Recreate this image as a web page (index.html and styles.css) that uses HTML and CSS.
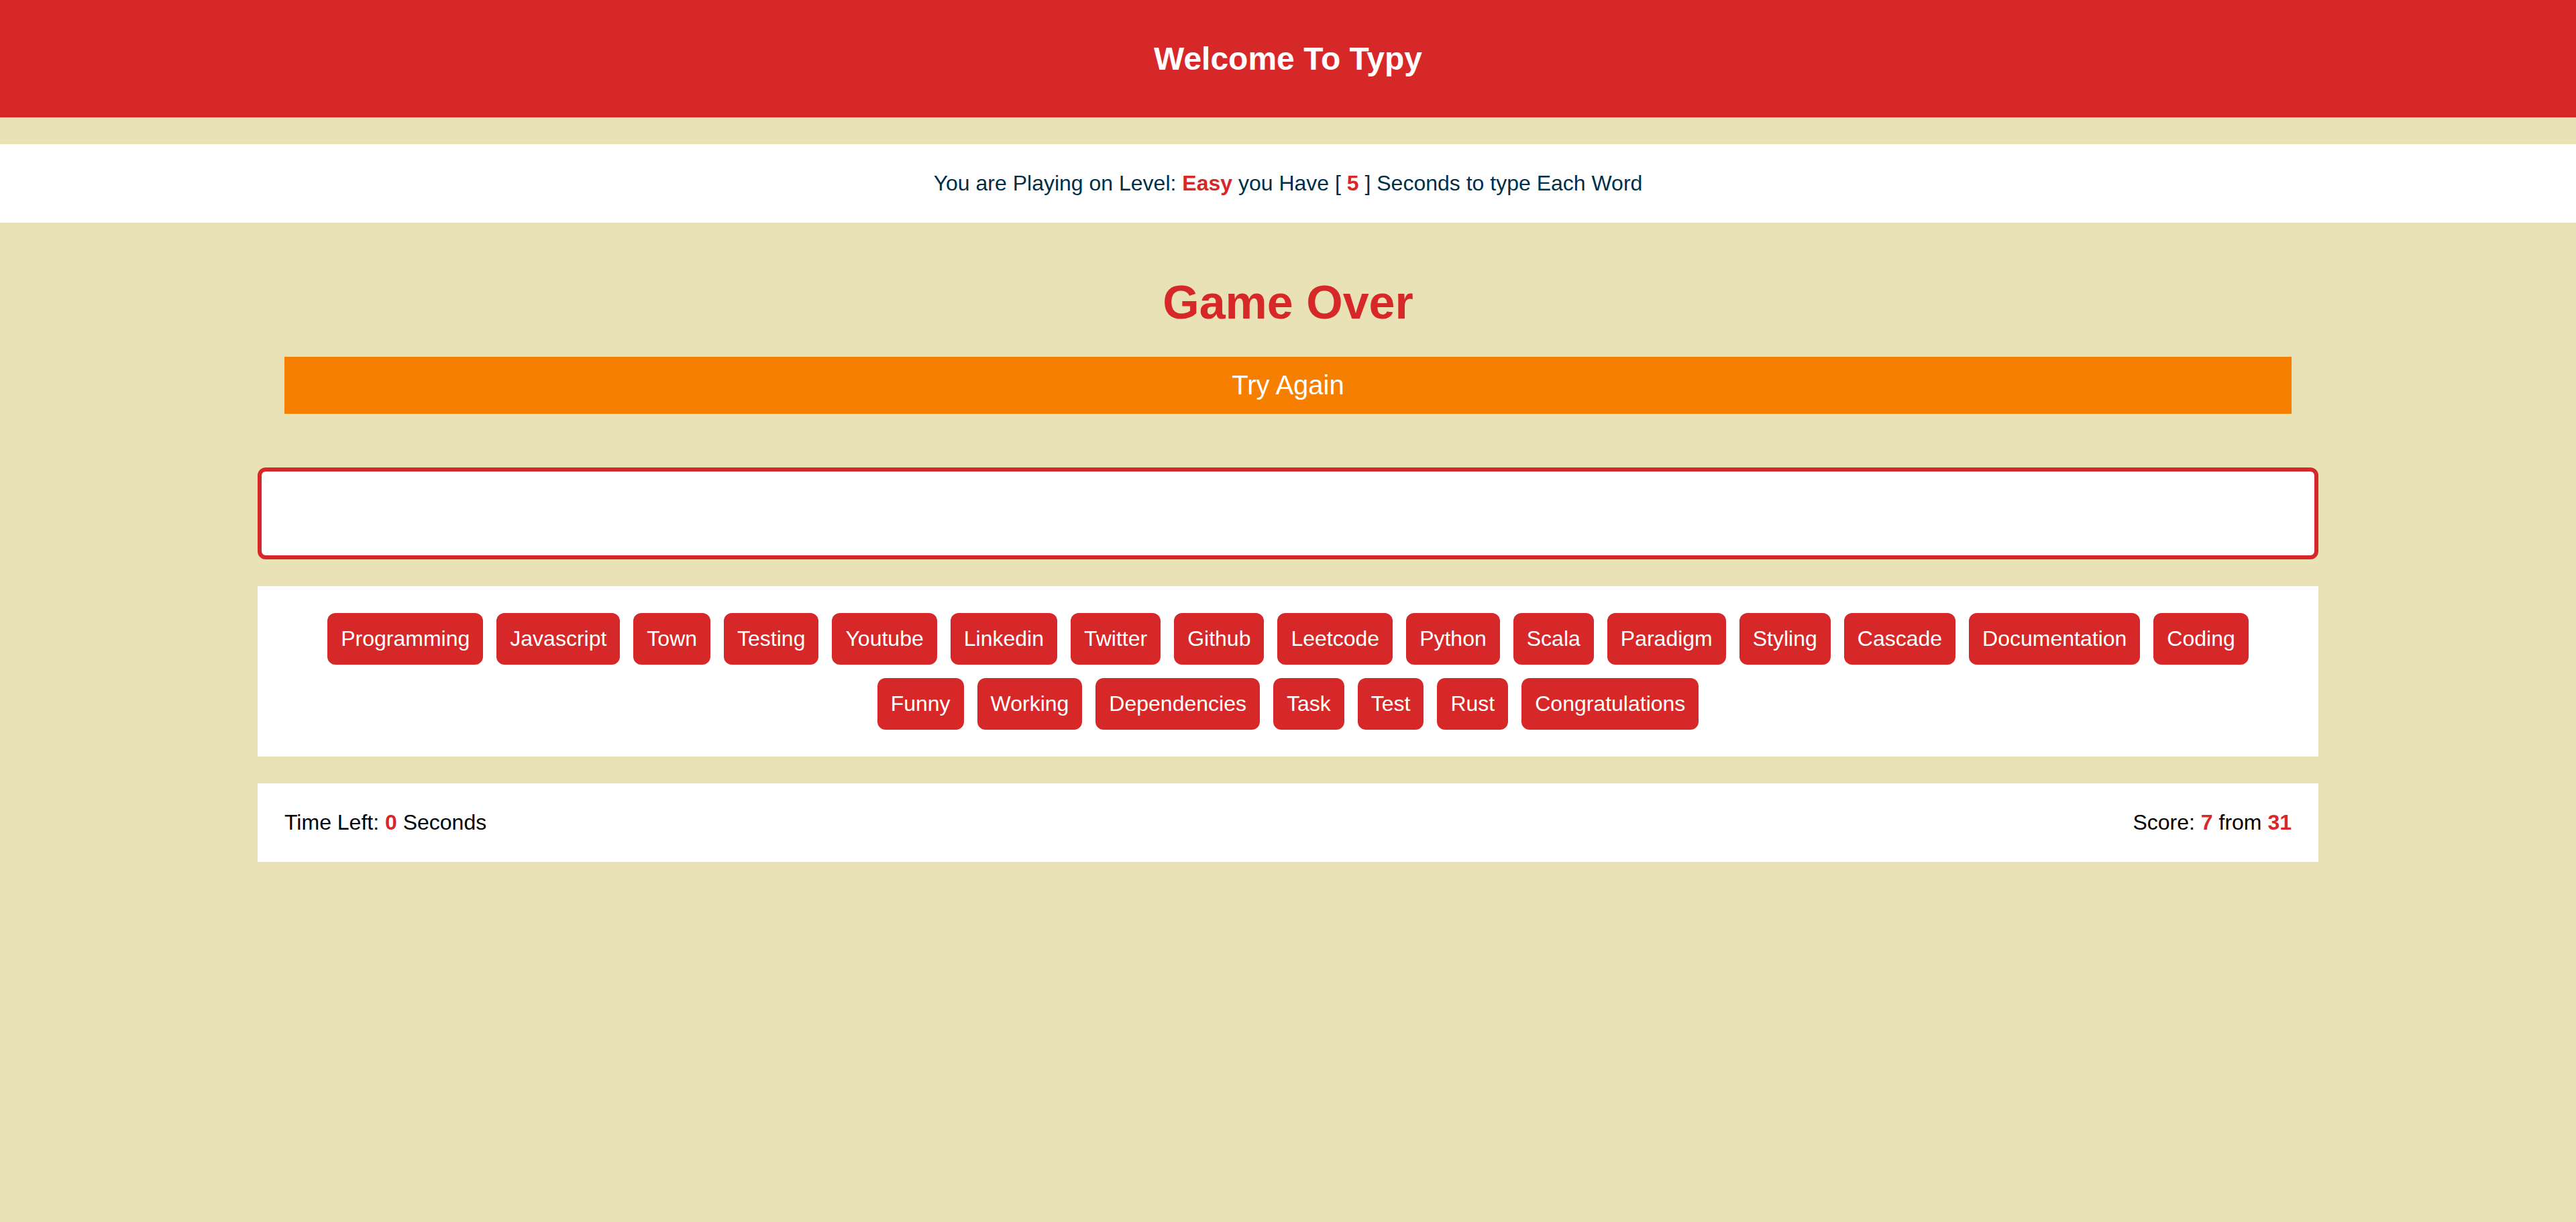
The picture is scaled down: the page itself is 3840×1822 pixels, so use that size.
FILE: index.html
```html
<!DOCTYPE html>
<html lang="en">
<head>
<meta charset="utf-8">
<title>Typy</title>
<link rel="stylesheet" href="styles.css">
</head>
<body>
<header class="top-bar">
  <h1 class="title">Welcome To Typy</h1>
</header>
<div class="message">You are Playing on Level: <span class="hl">Easy</span> you Have [ <span class="hl">5</span> ] Seconds to type Each Word</div>
<main class="game">
  <h2 class="game-over">Game Over</h2>
  <div class="again-wrap">
    <div class="try-again">Try Again</div>
  </div>
  <input class="word-input" type="text" aria-label="Type the word">
  <div class="words">
    <span class="word">Programming</span>
    <span class="word">Javascript</span>
    <span class="word">Town</span>
    <span class="word">Testing</span>
    <span class="word">Youtube</span>
    <span class="word">Linkedin</span>
    <span class="word">Twitter</span>
    <span class="word">Github</span>
    <span class="word">Leetcode</span>
    <span class="word">Python</span>
    <span class="word">Scala</span>
    <span class="word">Paradigm</span>
    <span class="word">Styling</span>
    <span class="word">Cascade</span>
    <span class="word">Documentation</span>
    <span class="word">Coding</span>
    <span class="word">Funny</span>
    <span class="word">Working</span>
    <span class="word">Dependencies</span>
    <span class="word">Task</span>
    <span class="word">Test</span>
    <span class="word">Rust</span>
    <span class="word">Congratulations</span>
  </div>
  <div class="status">
    <div class="time">Time Left: <span class="hl">0</span> Seconds</div>
    <div class="score">Score: <span class="hl">7</span> from <span class="hl">31</span></div>
  </div>
</main>
</body>
</html>
```
FILE: styles.css
```css
* { box-sizing: border-box; }

html, body {
  margin: 0;
  padding: 0;
}

body {
  background: #eae2b7;
  font-family: "Liberation Sans", Arial, sans-serif;
  min-height: 1822px;
}

.top-bar {
  height: 175px;
  background: #d62828;
  display: flex;
  align-items: center;
  justify-content: center;
}

.title {
  margin: 0;
  color: #ffffff;
  font-size: 48px;
  font-weight: bold;
  line-height: 1;
}

.message {
  margin-top: 40px;
  background: #ffffff;
  padding: 40px;
  text-align: center;
  color: #003049;
  font-size: 32px;
  line-height: 37px;
}

.hl {
  color: #d62828;
  font-weight: bold;
}

.game {
  width: 3072px;
  margin: 0 auto;
}

.game-over {
  margin: 79px 0 40px;
  text-align: center;
  color: #d62828;
  font-size: 70px;
  line-height: 81px;
  font-weight: bold;
}

.again-wrap {
  padding: 0 40px;
}

.try-again {
  background: #f77f00;
  color: #ffffff;
  text-align: center;
  font-size: 40px;
  line-height: 45px;
  padding: 20px;
}

.word-input {
  display: block;
  width: 100%;
  height: 137px;
  margin-top: 80px;
  border: 6px solid #d62828;
  border-radius: 12px;
  background: #ffffff;
  outline: none;
  font-family: inherit;
  font-size: 39px;
  padding: 0 30px;
}

.words {
  margin-top: 40px;
  background: #ffffff;
  padding: 40px;
  display: flex;
  flex-wrap: wrap;
  justify-content: center;
  gap: 20px;
}

.word {
  background: #d62828;
  color: #ffffff;
  font-size: 32px;
  line-height: 37px;
  padding: 20px;
  border-radius: 12px;
}

.status {
  margin-top: 40px;
  background: #ffffff;
  padding: 40px;
  display: flex;
  justify-content: space-between;
  font-size: 32px;
  line-height: 37px;
  color: #000000;
}
```
